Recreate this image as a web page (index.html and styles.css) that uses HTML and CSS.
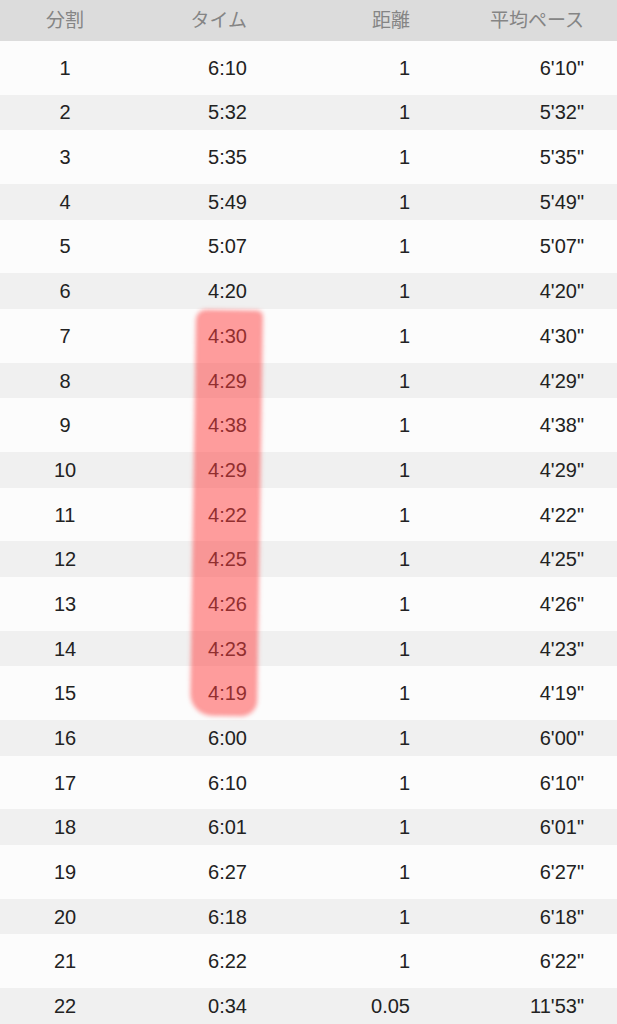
FILE: index.html
```html
<!DOCTYPE html>
<html lang="ja">
<head>
    <meta charset="UTF-8">
    <meta name="viewport" content="width=device-width, initial-scale=1.0">
    <title>スプリット</title>
    <link rel="stylesheet" href="styles.css">
</head>
<body>
    <div class="splits">
        <div class="row header">
            <div class="cell split">分割</div>
            <div class="cell">タイム</div>
            <div class="cell">距離</div>
            <div class="cell">平均ペース</div>
        </div>
        <div class="row"><div class="cell split">1</div><div class="cell">6:10</div><div class="cell">1</div><div class="cell">6'10"</div></div>
        <div class="row"><div class="cell split">2</div><div class="cell">5:32</div><div class="cell">1</div><div class="cell">5'32"</div></div>
        <div class="row"><div class="cell split">3</div><div class="cell">5:35</div><div class="cell">1</div><div class="cell">5'35"</div></div>
        <div class="row"><div class="cell split">4</div><div class="cell">5:49</div><div class="cell">1</div><div class="cell">5'49"</div></div>
        <div class="row"><div class="cell split">5</div><div class="cell">5:07</div><div class="cell">1</div><div class="cell">5'07"</div></div>
        <div class="row"><div class="cell split">6</div><div class="cell">4:20</div><div class="cell">1</div><div class="cell">4'20"</div></div>
        <div class="row"><div class="cell split">7</div><div class="cell">4:30</div><div class="cell">1</div><div class="cell">4'30"</div></div>
        <div class="row"><div class="cell split">8</div><div class="cell">4:29</div><div class="cell">1</div><div class="cell">4'29"</div></div>
        <div class="row"><div class="cell split">9</div><div class="cell">4:38</div><div class="cell">1</div><div class="cell">4'38"</div></div>
        <div class="row"><div class="cell split">10</div><div class="cell">4:29</div><div class="cell">1</div><div class="cell">4'29"</div></div>
        <div class="row"><div class="cell split">11</div><div class="cell">4:22</div><div class="cell">1</div><div class="cell">4'22"</div></div>
        <div class="row"><div class="cell split">12</div><div class="cell">4:25</div><div class="cell">1</div><div class="cell">4'25"</div></div>
        <div class="row"><div class="cell split">13</div><div class="cell">4:26</div><div class="cell">1</div><div class="cell">4'26"</div></div>
        <div class="row"><div class="cell split">14</div><div class="cell">4:23</div><div class="cell">1</div><div class="cell">4'23"</div></div>
        <div class="row"><div class="cell split">15</div><div class="cell">4:19</div><div class="cell">1</div><div class="cell">4'19"</div></div>
        <div class="row"><div class="cell split">16</div><div class="cell">6:00</div><div class="cell">1</div><div class="cell">6'00"</div></div>
        <div class="row"><div class="cell split">17</div><div class="cell">6:10</div><div class="cell">1</div><div class="cell">6'10"</div></div>
        <div class="row"><div class="cell split">18</div><div class="cell">6:01</div><div class="cell">1</div><div class="cell">6'01"</div></div>
        <div class="row"><div class="cell split">19</div><div class="cell">6:27</div><div class="cell">1</div><div class="cell">6'27"</div></div>
        <div class="row"><div class="cell split">20</div><div class="cell">6:18</div><div class="cell">1</div><div class="cell">6'18"</div></div>
        <div class="row"><div class="cell split">21</div><div class="cell">6:22</div><div class="cell">1</div><div class="cell">6'22"</div></div>
        <div class="row"><div class="cell split">22</div><div class="cell">0:34</div><div class="cell">0.05</div><div class="cell">11'53"</div></div>

        <!-- marker stroke over the fast splits -->
        <div class="marker"></div>
    </div>
</body>
</html>
```

FILE: styles.css
```css
body {
    margin: 0;
    padding: 0;
    background-color: #fcfcfc;
    font-family: "Liberation Sans", "Noto Sans CJK JP", sans-serif;
    overflow: hidden;
}

.splits {
    position: relative;
    width: 617px;
}

.row {
    display: grid;
    grid-template-columns: 130px 117px 163px 174px;
    align-items: center;
    height: 53.6px;
    background-color: #fcfcfc;
    color: #222;
    font-size: 20px;
}

.row:nth-child(odd) {
    height: 35.76px;
    background-color: #f0f0f0;
}

.row.header {
    height: 41px;
    background-color: #dcdcdc;
    color: #858585;
    font-size: 19px;
}

.cell {
    text-align: right;
    line-height: 1;
}

.cell.split {
    text-align: center;
}

.marker {
    position: absolute;
    left: 193px;
    top: 310px;
    width: 67px;
    height: 406px;
    background-color: rgba(255, 60, 60, 0.5);
    border-radius: 10px 6px 16px 22px;
    transform: rotate(0.85deg);
    filter: blur(2px);
}
```
